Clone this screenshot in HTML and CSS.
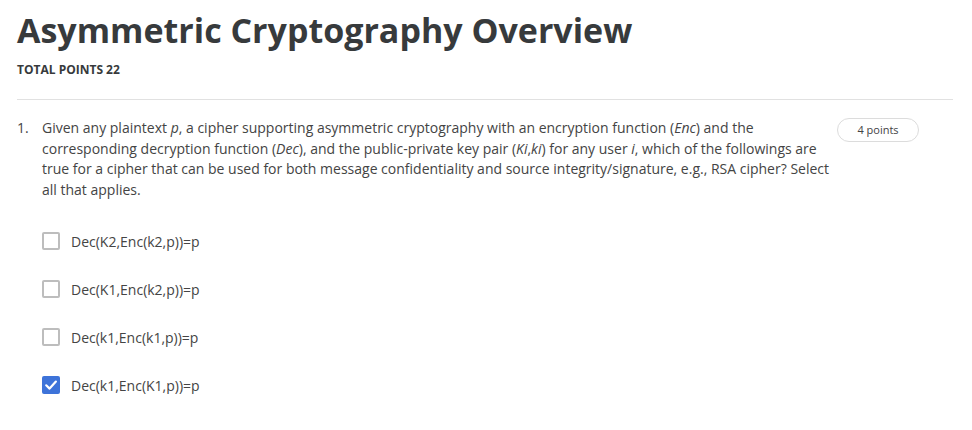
FILE: index.html
```html
<!DOCTYPE html>
<html>
<head>
<meta charset="utf-8">
<link rel="stylesheet" href="styles.css">
</head>
<body>
<div class="page">
  <header class="header">
    <h1 class="title">Asymmetric Cryptography Overview</h1>
    <div class="total">TOTAL POINTS 22</div>
  </header>
  <div class="question">
    <div class="qnum">1.</div>
    <div class="qbody">
      <div class="qtext">Given any plaintext <i>p</i>, a cipher supporting asymmetric cryptography with an encryption function (<i>Enc</i>) and the corresponding decryption function (<i>Dec</i>), and the public-private key pair (<i>Ki</i>,<i>ki</i>) for any user <i>i</i>, which of the followings are true for a cipher that can be used for both message confidentiality and source integrity/signature, e.g., RSA cipher? Select all that applies.</div>
      <ul class="options">
        <li class="option"><span class="box"></span><span class="label">Dec(K2,Enc(k2,p))=p</span></li>
        <li class="option"><span class="box"></span><span class="label">Dec(K1,Enc(k2,p))=p</span></li>
        <li class="option"><span class="box"></span><span class="label">Dec(k1,Enc(k1,p))=p</span></li>
        <li class="option"><span class="box checked"><svg viewBox="0 0 18 18" width="18" height="18"><path d="M4.2 9.3 L7.6 12.6 L13.9 5.6" fill="none" stroke="#fff" stroke-width="2.2" stroke-linecap="round" stroke-linejoin="round"/></svg></span><span class="label">Dec(k1,Enc(K1,p))=p</span></li>
      </ul>
    </div>
    <div class="points">4 points</div>
  </div>
</div>
</body>
</html>
```
FILE: styles.css
```css
html, body {
  margin: 0;
  padding: 0;
  background: #fff;
}
body {
  font-family: "Open Sans", "Liberation Sans", sans-serif;
  color: #373a3c;
}
.page {
  padding: 10px 19px 0 17px;
}
.title {
  margin: 0;
  font-size: 34px;
  font-weight: 700;
  line-height: 40px;
  color: #373a3c;
}
.total {
  margin-top: 12px;
  font-size: 12px;
  font-weight: 700;
  line-height: 16px;
  color: #373a3c;
}
.header {
  padding-bottom: 21px;
  border-bottom: 1px solid #e1e1e1;
}
.question {
  display: flex;
  align-items: flex-start;
  padding-top: 18px;
}
.qnum {
  width: 25px;
  flex: none;
  font-size: 14px;
  line-height: 20.5px;
  color: #444;
}
.qbody {
  width: 790px;
  flex: none;
}
.qtext {
  font-size: 14px;
  line-height: 20.5px;
  color: #444;
}
.points {
  margin-left: 5px;
  width: 80px;
  height: 22px;
  border: 1px solid #dcdcdc;
  border-radius: 12px;
  font-size: 11px;
  line-height: 22px;
  text-align: center;
  color: #444;
}
.options {
  list-style: none;
  margin: 32px 0 0 0;
  padding: 0;
  display: flex;
  flex-direction: column;
  gap: 30px;
}
.option {
  display: flex;
  align-items: center;
  height: 18px;
}
.box {
  width: 18px;
  height: 18px;
  box-sizing: border-box;
  border: 2px solid #bdbdbd;
  border-radius: 2px;
  margin-right: 11px;
  flex: none;
}
.box.checked {
  border: none;
  background: #3d73d9;
}
.box svg {
  display: block;
}
.label {
  font-size: 14px;
  color: #444;
}
```
